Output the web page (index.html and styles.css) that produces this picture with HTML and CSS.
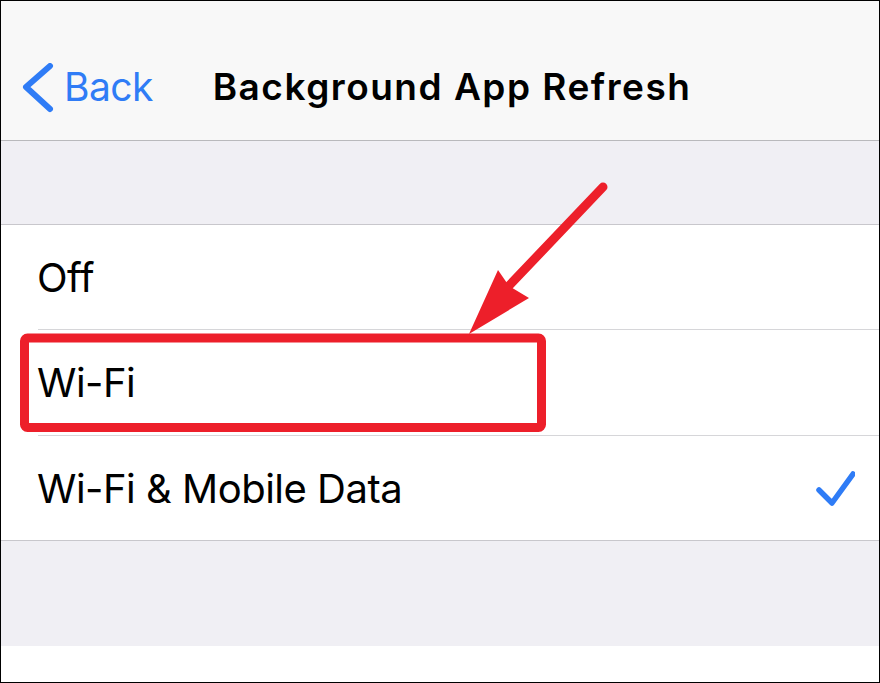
FILE: index.html
```html
<!DOCTYPE html>
<html>
<head>
<meta charset="utf-8">
<link rel="stylesheet" href="styles.css">
</head>
<body>
<div class="frame">
  <header class="nav">
    <a class="back">
      <svg class="chev" width="34" height="52" viewBox="0 0 34 52"><path d="M28 3 L4 24 L28 46" fill="none" stroke="#2f7cf6" stroke-width="6" stroke-linecap="round" stroke-linejoin="round"/></svg>
      <span class="back-label">Back</span>
    </a>
    <h1 class="title">Background App Refresh</h1>
  </header>
  <div class="group-gap"></div>
  <ul class="list">
    <li class="row"><div class="row-inner">Off</div></li>
    <li class="row"><div class="row-inner mid">Wi-Fi</div></li>
    <li class="row"><div class="row-inner last"><span>Wi-Fi &amp; Mobile Data</span>
      <svg class="check" width="40" height="36" viewBox="0 0 40 36"><path d="M4 20 L17 33 L38 4" fill="none" stroke="#2f7cf6" stroke-width="5.5" stroke-linecap="round" stroke-linejoin="round"/></svg>
    </div></li>
  </ul>
  <div class="group-gap bottom"></div>
</div>
<svg class="annot" width="880" height="683" viewBox="0 0 880 683">
  <rect x="24.5" y="338" width="517" height="89.5" rx="3" fill="none" stroke="#ed1f2a" stroke-width="9"/>
  <line x1="603" y1="187" x2="504" y2="291" stroke="#ed1f2a" stroke-width="9" stroke-linecap="round"/>
  <polygon points="469,334 498,270 509,286 529,298" fill="#ed1f2a"/>
</svg>
</body>
</html>
```

FILE: styles.css
```css
html, body {
  margin: 0;
  padding: 0;
}
body {
  position: relative;
  width: 880px;
  height: 683px;
  background: #fff;
  font-family: Inter, "Liberation Sans", sans-serif;
  color: #000;
}
.frame {
  box-sizing: border-box;
  width: 880px;
  height: 683px;
  border: 1px solid #000;
  overflow: hidden;
  background: #fff;
}
.nav {
  box-sizing: border-box;
  height: 140px;
  background: #f8f8f8;
  border-bottom: 1px solid #b9b9bc;
  display: flex;
  align-items: center;
  padding-left: 21px;
  padding-top: 32px;
}
.back {
  display: flex;
  align-items: center;
  color: #2f7cf6;
}
.chev {
  display: block;
  margin-top: 4px;
}
.back-label {
  font-size: 39px;
  letter-spacing: -0.6px;
  margin-left: 8px;
}
.title {
  margin: 0 0 0 60px;
  font-size: 37px;
  font-weight: 600;
  letter-spacing: 1.5px;
}
.group-gap {
  height: 83px;
  background: #f0eff4;
  border-bottom: 1px solid #c8c7cc;
}
.group-gap.bottom {
  height: 105px;
  border-bottom: none;
}
.list {
  list-style: none;
  margin: 0;
  padding: 0;
  background: #fff;
  border-bottom: 1px solid #c8c7cc;
}
.row {
  padding-left: 37px;
}
.row-inner {
  height: 104px;
  border-bottom: 1px solid #d6d6d9;
  display: flex;
  align-items: center;
  justify-content: space-between;
  padding-right: 24px;
  font-size: 40px;
  letter-spacing: -0.5px;
  text-indent: -1px;
}
.row-inner.mid {
  height: 105px;
}
.row-inner.last {
  border-bottom: none;
}
.check {
  display: block;
}
.annot {
  position: absolute;
  left: 0;
  top: 0;
  pointer-events: none;
}
```
